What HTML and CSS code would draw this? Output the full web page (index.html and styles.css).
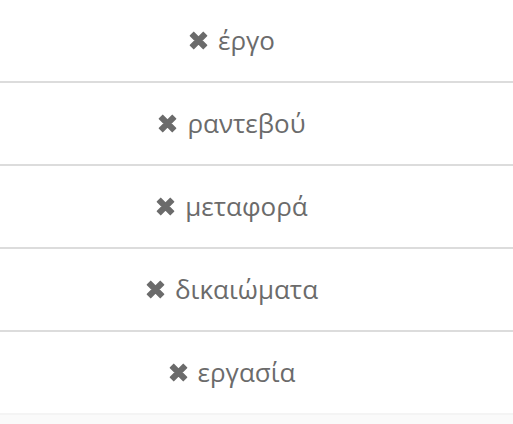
FILE: index.html
```html
<!DOCTYPE html>
<html lang="el">
<head>
<meta charset="utf-8">
<link rel="stylesheet" href="styles.css">
</head>
<body>
<ul class="tags">
  <li class="tag"><span class="x"><svg viewBox="0 0 20 20" width="19" height="19"><path d="M1.5 5 L5 1.5 L10 6.5 L15 1.5 L18.5 5 L13.5 10 L18.5 15 L15 18.5 L10 13.5 L5 18.5 L1.5 15 L6.5 10 Z" fill="#6b6b6b" stroke="#6b6b6b" stroke-width="1.6" stroke-linejoin="round"/></svg></span><span class="label">έργο</span></li>
  <li class="tag"><span class="x"><svg viewBox="0 0 20 20" width="19" height="19"><path d="M1.5 5 L5 1.5 L10 6.5 L15 1.5 L18.5 5 L13.5 10 L18.5 15 L15 18.5 L10 13.5 L5 18.5 L1.5 15 L6.5 10 Z" fill="#6b6b6b" stroke="#6b6b6b" stroke-width="1.6" stroke-linejoin="round"/></svg></span><span class="label">ραντεβού</span></li>
  <li class="tag"><span class="x"><svg viewBox="0 0 20 20" width="19" height="19"><path d="M1.5 5 L5 1.5 L10 6.5 L15 1.5 L18.5 5 L13.5 10 L18.5 15 L15 18.5 L10 13.5 L5 18.5 L1.5 15 L6.5 10 Z" fill="#6b6b6b" stroke="#6b6b6b" stroke-width="1.6" stroke-linejoin="round"/></svg></span><span class="label">μεταφορά</span></li>
  <li class="tag"><span class="x"><svg viewBox="0 0 20 20" width="19" height="19"><path d="M1.5 5 L5 1.5 L10 6.5 L15 1.5 L18.5 5 L13.5 10 L18.5 15 L15 18.5 L10 13.5 L5 18.5 L1.5 15 L6.5 10 Z" fill="#6b6b6b" stroke="#6b6b6b" stroke-width="1.6" stroke-linejoin="round"/></svg></span><span class="label">δικαιώματα</span></li>
  <li class="tag last"><span class="x"><svg viewBox="0 0 20 20" width="19" height="19"><path d="M1.5 5 L5 1.5 L10 6.5 L15 1.5 L18.5 5 L13.5 10 L18.5 15 L15 18.5 L10 13.5 L5 18.5 L1.5 15 L6.5 10 Z" fill="#6b6b6b" stroke="#6b6b6b" stroke-width="1.6" stroke-linejoin="round"/></svg></span><span class="label">εργασία</span></li>
</ul>
</body>
</html>
```
FILE: styles.css
```css
html, body {
  margin: 0;
  padding: 0;
  background: #fafafa;
}
.tags {
  list-style: none;
  margin: 0;
  padding: 0;
  background: #fff;
  font-family: "Open Sans", "DejaVu Sans", sans-serif;
  font-size: 26px;
  color: #6b6b6b;
}
.tag {
  height: 81px;
  border-bottom: 2px solid #dcdcdc;
  display: flex;
  align-items: center;
  justify-content: center;
  gap: 10px;
  padding-right: 49px;
}
.tag.last {
  border-bottom-color: #f4f4f4;
}
.x {
  display: flex;
  align-items: center;
}
.x svg {
  display: block;
}
.label {
  margin-top: -2px;
}
```
